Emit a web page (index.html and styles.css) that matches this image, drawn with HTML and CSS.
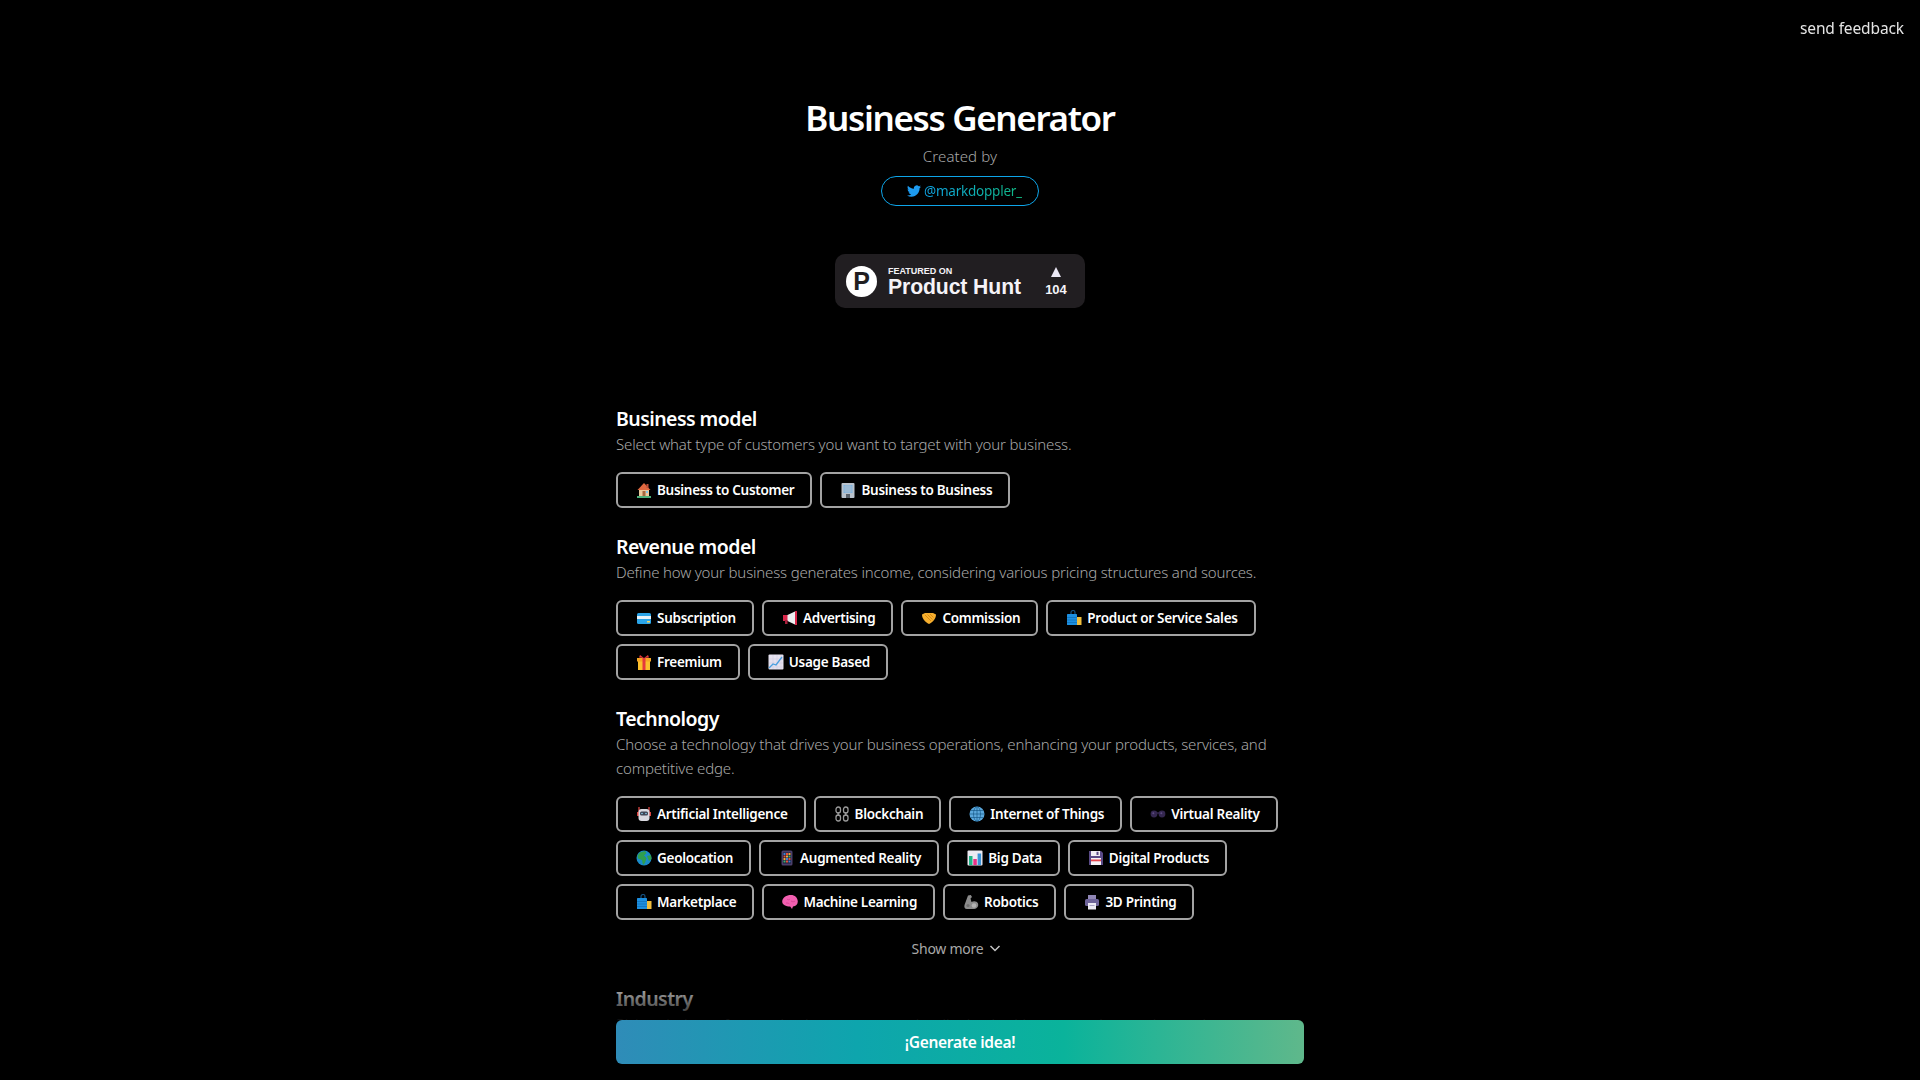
FILE: index.html
```html
<!DOCTYPE html>
<html lang="en">
<head>
<meta charset="utf-8">
<title>Business Generator</title>
<link rel="stylesheet" href="styles.css">
</head>
<body>
<svg class="sprite" aria-hidden="true">
<symbol id="i-house" viewBox="0 0 16 16"><rect x="1" y="14" width="14" height="2" fill="#4caf7a"/><rect x="3" y="7" width="10" height="7" fill="#e9c79a"/><path d="M8 1 1.500 8h13z" fill="#e0683f"/><rect x="10.500" y="2" width="2" height="4" fill="#c0503a"/><rect x="6.500" y="9" width="3" height="5" fill="#a5673f"/><rect x="10" y="9" width="2" height="2" fill="#7fc4ea"/></symbol>
<symbol id="i-office" viewBox="0 0 16 16"><rect x="1.500" y="1" width="13" height="15" rx="1" fill="#b9c2cc"/><rect x="3.500" y="3" width="9" height="8" fill="#7fb2dd"/><path d="M6 3v8M8 3v8M10 3v8M3.500 5h9M3.500 7h9M3.500 9h9" stroke="#b9c2cc" stroke-width=".6"/><rect x="6" y="12" width="4" height="4" fill="#57606a"/></symbol>
<symbol id="i-card" viewBox="0 0 16 16"><rect x="1" y="3" width="14" height="11" rx="1.500" fill="#2aa4e8"/><rect x="1" y="6" width="14" height="3" fill="#e6f3fb"/><rect x="11" y="11" width="3" height="1.500" fill="#f3d35c"/></symbol>
<symbol id="i-mega" viewBox="0 0 16 16"><path d="M1 5h5v6H1z" fill="#d8274a"/><path d="M5.500 5 14 1v14l-8.500-4z" fill="#eceff1"/><rect x="13" y="1" width="2" height="14" fill="#d8274a"/><rect x="3" y="10" width="2.500" height="4" fill="#a81f3c"/></symbol>
<symbol id="i-shake" viewBox="0 0 16 16"><path d="M1 4.500 4 3h8l3 1.500c0 4-3 7.500-7 9.500-4-2-7-5.500-7-9.500z" fill="#f5ae2e"/><path d="M4 5l6 6M6.500 4.500l5 5M9 4l3.500 3.500" stroke="#d98a12" stroke-width="1"/></symbol>
<symbol id="i-bag" viewBox="0 0 16 16"><path d="M5 4V2.500a2 2 0 0 1 4 0V4" fill="none" stroke="#14507f" stroke-width="1.200"/><rect x="9" y="7" width="6.500" height="8" fill="#f0bd3c"/><rect x="1" y="4" width="10" height="11" rx=".6" fill="#1c8fe0"/><path d="M1 7.500h10M1 10h10M1 12.500h10" stroke="#0f6db4" stroke-width=".7"/></symbol>
<symbol id="i-gift" viewBox="0 0 16 16"><rect x="2" y="7" width="12" height="9" fill="#fbc02d"/><rect x="1" y="4" width="14" height="3.500" fill="#f6a623"/><rect x="6.500" y="4" width="3" height="12" fill="#e5393d"/><path d="M8 4 4 1 3 3.500zM8 4l4-3 1 2.500z" fill="#e5393d"/></symbol>
<symbol id="i-chart" viewBox="0 0 16 16"><rect x=".5" y=".5" width="15" height="15" rx="1" fill="#e6e2f0"/><path d="M1 5h14M1 9h14M1 13h14M5 1v14M9 1v14M13 1v14" stroke="#c9c4dc" stroke-width=".5"/><path d="M1 14 5 10l3 1 6-8" fill="none" stroke="#4b9fe0" stroke-width="1.300"/></symbol>
<symbol id="i-robot" viewBox="0 0 16 16"><path d="M3 1v5M13 1v5" stroke="#d9433f" stroke-width="1.300"/><rect x="1" y="6" width="2" height="4" fill="#d9433f"/><rect x="13" y="6" width="2" height="4" fill="#d9433f"/><rect x="2.500" y="3" width="11" height="12" rx="3" fill="#d9d9e0"/><rect x="4" y="5.500" width="8" height="4" rx="1.500" fill="#3f4656"/><circle cx="6" cy="7.500" r=".8" fill="#8fd3f0"/><circle cx="10" cy="7.500" r=".8" fill="#8fd3f0"/></symbol>
<symbol id="i-chain" viewBox="0 0 16 16"><g fill="none" stroke="#9a9a9a" stroke-width="1.300"><rect x="2" y="1" width="4.500" height="6" rx="2.200"/><rect x="2" y="9" width="4.500" height="6" rx="2.200"/><rect x="9.500" y="1" width="4.500" height="6" rx="2.200"/><rect x="9.500" y="9" width="4.500" height="6" rx="2.200"/><path d="M4.200 6v4M11.800 6v4"/></g></symbol>
<symbol id="i-globe" viewBox="0 0 16 16"><circle cx="8" cy="8" r="7.500" fill="#5ba8dc"/><g fill="none" stroke="#0f4f7d" stroke-width=".6"><ellipse cx="8" cy="8" rx="3.500" ry="7.300"/><path d="M8 .7v14.600M.7 8h14.600M1.800 4.500h12.400M1.800 11.500h12.400"/></g></symbol>
<symbol id="i-goggles" viewBox="0 0 16 16"><path d="M6.500 7h3" stroke="#3d2f5a" stroke-width="1.300"/><circle cx="4" cy="8" r="3.400" fill="#34274f"/><circle cx="12" cy="8" r="3.400" fill="#34274f"/><circle cx="3.300" cy="7.300" r="1" fill="#5d4b83"/><circle cx="11.300" cy="7.300" r="1" fill="#5d4b83"/></symbol>
<symbol id="i-earth" viewBox="0 0 16 16"><circle cx="8" cy="8" r="7.500" fill="#1a8bc9"/><path d="M4 2.500 9 1l1.500 2L8 5.500l2.500 2.500L9 13l-2 2-1-5-4-1.500-.5-3zM11 6l4-1 .5 4-2.500 2z" fill="#2f9f4e"/></symbol>
<symbol id="i-phone" viewBox="0 0 16 16"><rect x="2.500" y=".5" width="11" height="15" rx="1.500" fill="#4a3f6b"/><rect x="4" y="2.500" width="8" height="11" fill="#1f1a33"/><path d="M4.500 3h2v2h-2z" fill="#3b82d6"/><path d="M7 3h2v2H7z" fill="#e5533d"/><path d="M9.500 3h2v2h-2z" fill="#f2a93b"/><path d="M4.500 5.500h2v2h-2z" fill="#e5533d"/><path d="M7 5.500h2v2H7z" fill="#f2a93b"/><path d="M9.500 5.500h2v2h-2z" fill="#3bb273"/><path d="M4.500 8h2v2h-2z" fill="#f2a93b"/><path d="M7 8h2v2H7z" fill="#3b82d6"/><path d="M9.500 8h2v2h-2z" fill="#e5533d"/><path d="M4.500 10.500h2v2h-2z" fill="#3bb273"/><path d="M7 10.500h2v2H7z" fill="#e5533d"/><path d="M9.500 10.500h2v2h-2z" fill="#3b82d6"/></symbol>
<symbol id="i-bars" viewBox="0 0 16 16"><rect x=".5" y=".5" width="15" height="15" rx="1" fill="#eceaf2"/><rect x="2" y="6" width="3.500" height="9" fill="#1fb587"/><rect x="6.300" y="9" width="3.500" height="6" fill="#ea2f86"/><rect x="10.600" y="3.500" width="3.500" height="11.500" fill="#3a93d8"/></symbol>
<symbol id="i-floppy" viewBox="0 0 16 16"><path d="M1 1h12l2 2v12H1z" fill="#5a4a87"/><rect x="3" y="1" width="9" height="5" fill="#f0eef5"/><rect x="8.500" y="1.800" width="2" height="3.200" fill="#5a4a87"/><rect x="3" y="8" width="10" height="7" fill="#f5f3f8"/><rect x="3" y="9.500" width="10" height="1.800" fill="#e5454d"/></symbol>
<symbol id="i-brain" viewBox="0 0 16 16"><path d="M9 1c3.700 0 6.800 2.700 6.800 6.500 0 2.800-2 4.700-4.800 5l-1 2.500-1.800-2.500C4 12.500.2 11 .2 7.500.2 3.700 4.500 1 9 1z" fill="#f25fb0"/><path d="M5 5c1 1 2 1 3 0M9 7c1.500 1 3 1 4 0M4 9c1.500 0 2.500 0 3.500 1" fill="none" stroke="#d23f90" stroke-width=".8"/></symbol>
<symbol id="i-arm" viewBox="0 0 16 16"><path d="M5 1.500 7.800 1 9 3 7.500 4.500 8.500 8c2-1.300 5.500-1 6.500 1.500 1 3.500-1.500 5.500-5 5.500H4C1.500 15 1 13 1.500 11z" fill="#8b8b8b"/><circle cx="11" cy="11.500" r="2.300" fill="#b3b3b3"/><circle cx="5" cy="11.500" r="1.600" fill="#6d6d6d"/></symbol>
<symbol id="i-printer" viewBox="0 0 16 16"><rect x="4" y="1" width="8" height="5" fill="#8f86b5"/><rect x="1" y="5" width="14" height="7" rx="1.500" fill="#6d6399"/><rect x="4" y="9" width="8" height="6.500" fill="#eceaf4"/><rect x="5.500" y="11" width="5" height="1" fill="#aaa4c6"/></symbol>
</svg>

<main class="page">
  <header class="hero">
    <h1 class="title">Business Generator</h1>
    <p class="created">Created by</p>
    <a class="pill" href="#">
      <svg class="bird" viewBox="0 0 24 24"><path d="M23.953 4.57a10 10 0 01-2.825.775 4.958 4.958 0 002.163-2.723c-.951.555-2.005.959-3.127 1.184a4.92 4.92 0 00-8.384 4.482C7.69 8.095 4.067 6.13 1.64 3.162a4.822 4.822 0 00-.666 2.475c0 1.71.87 3.213 2.188 4.096a4.904 4.904 0 01-2.228-.616v.06a4.923 4.923 0 003.946 4.827 4.996 4.996 0 01-2.212.085 4.936 4.936 0 004.604 3.417 9.867 9.867 0 01-6.102 2.105c-.39 0-.779-.023-1.17-.067a13.995 13.995 0 007.557 2.209c9.053 0 13.998-7.496 13.998-13.985 0-.21 0-.42-.015-.63A9.935 9.935 0 0024 4.59z"/></svg>
      <span class="handle">@markdoppler_</span>
    </a>
    <a class="ph" href="#">
      <span class="ph-logo">P</span>
      <span class="ph-text"><span class="ph-small">FEATURED ON</span><span class="ph-name">Product Hunt</span></span>
      <span class="ph-votes"><span class="ph-arrow"></span><span class="ph-count">104</span></span>
    </a>
  </header>

  <section class="group">
    <h2 class="group-title">Business model</h2>
    <p class="group-desc">Select what type of customers you want to target with your business.</p>
    <div class="chips">
      <button class="chip"><svg class="ico"><use href="#i-house"/></svg>Business to Customer</button>
      <button class="chip"><svg class="ico"><use href="#i-office"/></svg>Business to Business</button>
    </div>
  </section>

  <section class="group">
    <h2 class="group-title">Revenue model</h2>
    <p class="group-desc">Define how your business generates income, considering various pricing structures and sources.</p>
    <div class="chips">
      <button class="chip"><svg class="ico"><use href="#i-card"/></svg>Subscription</button>
      <button class="chip"><svg class="ico"><use href="#i-mega"/></svg>Advertising</button>
      <button class="chip"><svg class="ico"><use href="#i-shake"/></svg>Commission</button>
      <button class="chip"><svg class="ico"><use href="#i-bag"/></svg>Product or Service Sales</button>
      <button class="chip"><svg class="ico"><use href="#i-gift"/></svg>Freemium</button>
      <button class="chip"><svg class="ico"><use href="#i-chart"/></svg>Usage Based</button>
    </div>
  </section>

  <section class="group">
    <h2 class="group-title">Technology</h2>
    <p class="group-desc">Choose a technology that drives your business operations, enhancing your products, services, and competitive edge.</p>
    <div class="chips">
      <button class="chip"><svg class="ico"><use href="#i-robot"/></svg>Artificial Intelligence</button>
      <button class="chip"><svg class="ico"><use href="#i-chain"/></svg>Blockchain</button>
      <button class="chip"><svg class="ico"><use href="#i-globe"/></svg>Internet of Things</button>
      <button class="chip"><svg class="ico"><use href="#i-goggles"/></svg>Virtual Reality</button>
      <button class="chip"><svg class="ico"><use href="#i-earth"/></svg>Geolocation</button>
      <button class="chip"><svg class="ico"><use href="#i-phone"/></svg>Augmented Reality</button>
      <button class="chip"><svg class="ico"><use href="#i-bars"/></svg>Big Data</button>
      <button class="chip"><svg class="ico"><use href="#i-floppy"/></svg>Digital Products</button>
      <button class="chip"><svg class="ico"><use href="#i-bag"/></svg>Marketplace</button>
      <button class="chip"><svg class="ico"><use href="#i-brain"/></svg>Machine Learning</button>
      <button class="chip"><svg class="ico"><use href="#i-arm"/></svg>Robotics</button>
      <button class="chip"><svg class="ico"><use href="#i-printer"/></svg>3D Printing</button>
    </div>
    <button class="more">Show more
      <svg class="chev" viewBox="0 0 12 12"><path d="M1.500 4 6 8.500 10.500 4"/></svg>
    </button>
  </section>

  <section class="group group-last">
    <h2 class="group-title">Industry</h2>
    <p class="group-desc">Pick an industry for your business to operate in, aligning it with your passions and expertise.</p>
  </section>
</main>

<a class="feedback" href="#">send feedback</a>

<div class="cta-bar">
  <button class="cta">¡Generate idea!</button>
</div>
</body>
</html>
```

FILE: styles.css
```css
* { box-sizing: border-box; }
html, body { margin: 0; height: 100%; overflow: hidden; background: #000; }
body { font-family: "Noto Sans", "Open Sans", sans-serif; color: #fff; }
.sprite { display: none; }
a { text-decoration: none; color: inherit; }
h1, h2, p { margin: 0; }
button { font: inherit; color: inherit; background: none; border: 0; padding: 0; cursor: pointer; }

.page { display: flex; flex-direction: column; align-items: center; padding-top: 98px; }
.hero { display: flex; flex-direction: column; align-items: center; }
.title { font-size: 35px; line-height: 40px; font-weight: 600; letter-spacing: -1.35px; }
.created { margin-top: 6px; font-size: 15px; line-height: 24px; font-weight: 300; color: #a8a8a8; letter-spacing: .1px; }
.pill { margin-top: 8px; width: 158px; height: 30px; border: 1px solid #0ea5e9; border-radius: 15px; display: flex; align-items: center; padding-left: 25px; gap: 3px; }
.bird { width: 14px; height: 14px; fill: #1d9bf0; flex: none; }
.handle { font-size: 13.500px; font-weight: 400; letter-spacing: -.22px; background: linear-gradient(90deg, #0ea5e9, #10b981); -webkit-background-clip: text; background-clip: text; color: transparent; }

.ph { margin-top: 48px; width: 250px; height: 54px; border-radius: 10px; background: #211e21; display: flex; align-items: center; padding-left: 11px; font-family: "Liberation Sans", Arial, sans-serif; font-weight: 700; color: #f5f3f8; }
.ph-logo { width: 31px; height: 31px; border-radius: 50%; background: #fff; color: #211e21; display: flex; align-items: center; justify-content: center; font-size: 25px; line-height: 1; flex: none; }
.ph-text { display: flex; flex-direction: column; margin-left: 11px; width: 152px; padding-top: 3px; }
.ph-small { font-size: 9px; line-height: 9px; }
.ph-name { font-size: 21.200px; line-height: 22px; letter-spacing: -.1px; }
.ph-votes { display: flex; flex-direction: column; align-items: center; gap: 6px; width: 28px; margin-left: 2px; }
.ph-arrow { width: 0; height: 0; border-left: 5.500px solid transparent; border-right: 5.500px solid transparent; border-bottom: 10px solid #ebe8f5; }
.ph-count { font-size: 13px; line-height: 13px; }

.group { width: 688px; margin-top: 25px; }
.hero + .group { margin-top: 97px; }
.group-title { font-size: 19.500px; line-height: 27px; font-weight: 600; letter-spacing: -.55px; }
.group-desc { font-size: 15px; line-height: 24px; font-weight: 300; color: #a8a8a8; letter-spacing: -.17px; }
.chips { display: flex; flex-wrap: wrap; gap: 8px; margin-top: 16px; }
.chip { height: 36px; display: flex; align-items: center; gap: 5px; padding: 0 16px 0 18px; border: 2px solid #a3a3a3; border-radius: 6px; font-size: 13.500px; font-weight: 600; letter-spacing: -.28px; white-space: nowrap; }
.ico { width: 16px; height: 16px; flex: none; }
.more { display: flex; align-items: center; justify-content: center; gap: 6px; width: 100%; margin-top: 16px; height: 24px; padding-right: 7px; font-size: 14px; color: #a8a8a8; letter-spacing: -.25px; }
.chev { width: 12px; height: 12px; fill: none; stroke: #c4c4c4; stroke-width: 1.500; }
.group-last { margin-top: 25px; }

.feedback { position: fixed; top: 16px; right: 16px; font-size: 15.500px; line-height: 24px; color: #e5e5e5; letter-spacing: -.12px; }

.cta-bar { position: fixed; left: 0; right: 0; bottom: 0; height: 130px; display: flex; justify-content: center; align-items: flex-end; padding-bottom: 16px; background: linear-gradient(180deg, rgba(0,0,0,0) 20px, rgba(0,0,0,.9) 70px, #000 71px); }
.cta { width: 688px; height: 44px; border-radius: 6px; background: linear-gradient(90deg, #2f8cb8 0%, #0ea5ad 35%, #0ab39b 65%, #5fb88b 100%); font-size: 15.500px; font-weight: 600; letter-spacing: -.3px; }
```
